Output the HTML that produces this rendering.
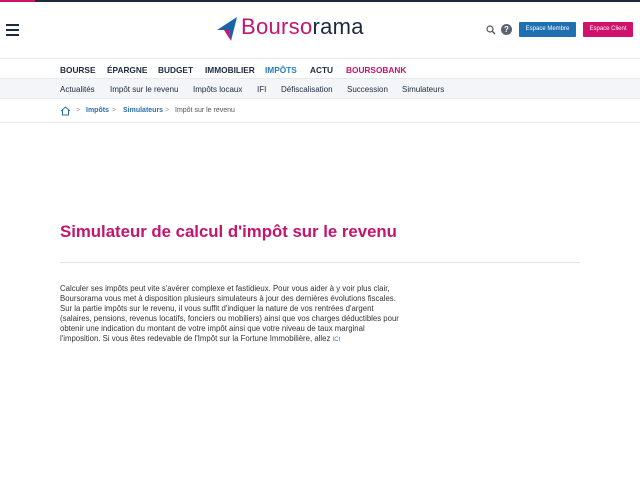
<!DOCTYPE html>
<html><head><meta charset="utf-8"><style>
*{margin:0;padding:0;box-sizing:border-box}
body{width:640px;height:480px;background:#fff;font-family:"Liberation Sans",sans-serif;position:relative;overflow:hidden;color:#222}
.a{position:absolute}
.top{left:0;top:0;width:640px;height:2px;background:#1c2a3d}
.top i{position:absolute;left:0;top:0;width:35px;height:2px;background:#d0126c}
.menu span{display:block;width:13px;height:2px;background:#1c2a3d;margin-bottom:3px}
.nav{left:0;top:58px;width:640px;height:21px;border-top:1px solid #e6e9ee;border-bottom:1px solid #e6e9ee;font-size:8.3px;font-weight:bold;color:#1c2a3d}
.nav span,.sub span{position:absolute;top:6px}
.sub{left:0;top:79px;width:640px;height:20px;background:#f3f5f8;border-bottom:1px solid #e6e9ee;font-size:8px;color:#1c2a3d}
.bc{top:107px;font-size:7px;color:#2a6fa8}
.btn{height:15px;top:22px;color:#fff;font-size:6px;text-align:center;line-height:15px;border-radius:1px}
p{font-size:7.8px;line-height:10px;color:#333}
</style></head><body>
<div class="a top"><i></i></div>
<div class="a menu" style="left:6px;top:24px"><span></span><span></span><span></span></div>
<svg class="a" style="left:216px;top:16px" width="24" height="26" viewBox="0 0 24 26"><path d="M1 14 L21 1 L15 25 L13 14 Z" fill="#1a63a8"/><path d="M13 14 L15 25 L8 14 Z" fill="#d0126c"/></svg>
<div class="a" style="left:241px;top:14px;font-size:22px;color:#c4146e;letter-spacing:0.3px">Bourso<span style="color:#1c2a3d">rama</span></div>
<svg class="a" style="left:486px;top:25px" width="10" height="10" viewBox="0 0 10 10"><circle cx="4" cy="4" r="3" fill="none" stroke="#555" stroke-width="1.2"/><path d="M6 6 L9 9" stroke="#555" stroke-width="1.4"/></svg>
<div class="a" style="left:501px;top:24px;width:11px;height:11px;border-radius:50%;background:#5a6470;color:#fff;font-size:8px;font-weight:bold;text-align:center;line-height:11px">?</div>
<div class="a btn" style="left:519px;top:22px;width:57px;background:#1f6fb3">Espace Membre</div>
<div class="a btn" style="left:583px;top:22px;width:50px;background:#d0126c">Espace Client</div>
<div class="a nav"><span style="left:60px">BOURSE</span><span style="left:107px">ÉPARGNE</span><span style="left:158px">BUDGET</span><span style="left:205px">IMMOBILIER</span><span style="left:265px;color:#2a7ab8">IMPÔTS</span><span style="left:310px">ACTU</span><span style="left:346px;color:#c4146e">BOURSOBANK</span></div>
<div class="a sub"><span style="left:60px">Actualités</span><span style="left:110px">Impôt sur le revenu</span><span style="left:193px">Impôts locaux</span><span style="left:257px">IFI</span><span style="left:281px">Défiscalisation</span><span style="left:347px">Succession</span><span style="left:402px">Simulateurs</span></div>
<svg class="a" style="left:60px;top:106px" width="11" height="10" viewBox="0 0 11 10"><path d="M1 5 L5.5 1 L10 5 M2.5 4 V9 H8.5 V4" fill="none" stroke="#2a6fa8" stroke-width="1"/></svg>
<div class="a bc" style="left:76px;color:#999">&gt;</div>
<div class="a bc" style="left:86px;font-weight:bold">Impôts</div>
<div class="a bc" style="left:112px;color:#999">&gt;</div>
<div class="a bc" style="left:123px;font-weight:bold">Simulateurs</div>
<div class="a bc" style="left:165px;color:#999">&gt;</div>
<div class="a bc" style="left:175px;color:#555">Impôt sur le revenu</div>
<div class="a" style="left:0;top:122px;width:640px;height:1px;background:#e6e9ee"></div>
<div class="a" style="left:60px;top:222px;font-size:16.8px;font-weight:bold;color:#c4146e">Simulateur de calcul d'impôt sur le revenu</div>
<div class="a" style="left:60px;top:262px;width:520px;height:1px;background:#e2e2e2"></div>
<div class="a" style="left:60px;top:284px;width:380px"><p>Calculer ses impôts peut vite s'avérer complexe et fastidieux. Pour vous aider à y voir plus clair,<br>Boursorama vous met à disposition plusieurs simulateurs à jour des dernières évolutions fiscales.<br>Sur la partie impôts sur le revenu, il vous suffit d'indiquer la nature de vos rentrées d'argent<br>(salaires, pensions, revenus locatifs, fonciers ou mobiliers) ainsi que vos charges déductibles pour<br>obtenir une indication du montant de votre impôt ainsi que votre niveau de taux marginal<br>l'imposition. Si vous êtes redevable de l'Impôt sur la Fortune Immobilière, allez <span style="color:#2a7ab8;font-size:6px">ICI</span></p></div>
</body></html>
